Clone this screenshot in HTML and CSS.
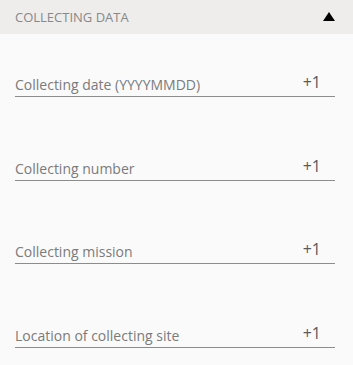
FILE: index.html
```html
<!DOCTYPE html>
<html lang="en">
<head>
  <meta charset="UTF-8" />
  <meta name="viewport" content="width=device-width, initial-scale=1.0"/>
  <title>Collecting data</title>
  <link rel="stylesheet" href="styles.css">
</head>
<body>

  <!-- Section header -->
  <div class="section-header">
    <span class="section-title">COLLECTING DATA</span>
    <span class="toggle-arrow"></span>
  </div>

  <!-- Fields -->
  <div class="fields">
    <div class="field">
      <span class="field-label">Collecting date (YYYYMMDD)</span>
      <span class="field-add">+1</span>
    </div>
    <div class="field">
      <span class="field-label">Collecting number</span>
      <span class="field-add">+1</span>
    </div>
    <div class="field">
      <span class="field-label">Collecting mission</span>
      <span class="field-add">+1</span>
    </div>
    <div class="field">
      <span class="field-label">Location of collecting site</span>
      <span class="field-add">+1</span>
    </div>
  </div>

</body>
</html>
```

FILE: styles.css
```css
* {
  margin: 0;
  padding: 0;
  box-sizing: border-box;
  font-family: 'Open Sans', sans-serif;
}

body {
  background-color: #fafafa;
  color: #777;
}

.section-header {
  height: 34px;
  display: flex;
  justify-content: space-between;
  align-items: center;
  padding: 0 18px 0 15px;
  background-color: #eeedec;
}

.section-title {
  font-size: 13px;
  color: #888;
}

.toggle-arrow {
  width: 0;
  height: 0;
  border-left: 6px solid transparent;
  border-right: 6px solid transparent;
  border-bottom: 9px solid #000;
  margin-top: -2px;
}

.fields {
  display: flex;
  flex-direction: column;
  gap: 59.67px;
  padding: 39px 18px 0 15px;
}

.field {
  display: flex;
  justify-content: space-between;
  align-items: flex-end;
  height: 24px;
  padding-bottom: 2px;
  border-bottom: 1px solid #8c8c8c;
}

.field-label {
  font-size: 14px;
  color: #7a7a7a;
}

.field-add {
  font-size: 16px;
  color: #5a5a5a;
  margin-right: 14px;
  margin-bottom: 1px;
}
```
